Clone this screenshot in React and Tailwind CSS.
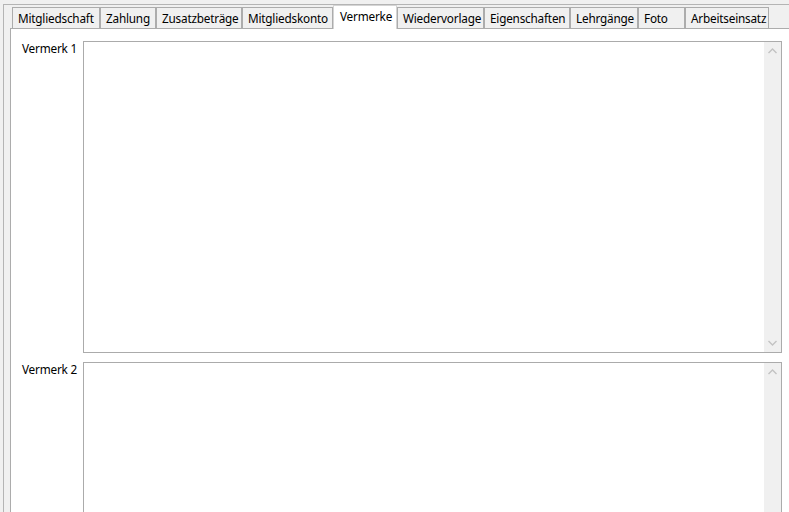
import React from "react";

const tabs = [
  { label: "Mitgliedschaft", w: "w-[88px]" },
  { label: "Zahlung", w: "w-[56px]" },
  { label: "Zusatzbeträge", w: "w-[86px]" },
  { label: "Mitgliedskonto", w: "w-[91px]" },
  { label: "Vermerke", w: "w-[64px]", active: true },
  { label: "Wiedervorlage", w: "w-[87px]" },
  { label: "Eigenschaften", w: "w-[86px]" },
  { label: "Lehrgänge", w: "w-[68px]" },
  { label: "Foto", w: "w-[47px]" },
  { label: "Arbeitseinsatz", w: "w-[84px]" },
];

function Up() {
  return (
    <svg width="9" height="6" viewBox="0 0 9 6">
      <path d="M0.5 5 L4.5 1 L8.5 5" fill="none" stroke="#c3c3c3" strokeWidth="1.4" />
    </svg>
  );
}
function Down() {
  return (
    <svg width="9" height="6" viewBox="0 0 9 6">
      <path d="M0.5 1 L4.5 5 L8.5 1" fill="none" stroke="#c3c3c3" strokeWidth="1.4" />
    </svg>
  );
}

function Memo({ h }) {
  return (
    <div className={`flex w-[699px] ${h} border border-[#ababab] bg-white`}>
      <div className="flex-1" />
      <div className="flex w-[17px] flex-col items-center justify-between bg-[#f0f0f0] pt-[6px] pb-[6px]">
        <Up />
        <Down />
      </div>
    </div>
  );
}

export default function App() {
  return (
    <div
      className="h-[512px] w-[789px] overflow-hidden bg-[#f0f0f0] pl-[3px] pt-[4px] text-[11.75px] tracking-[-0.2px] text-black"
      style={{ fontFamily: '"Noto Sans", "Open Sans", sans-serif' }}
    >
      <div className="flex h-[600px] flex-col border-l border-t border-[#b4b4b4] pl-[6px]">
        <div className="flex h-[24px] w-[900px] items-end border-b border-[#acacac] pl-[2px]">
          {tabs.map((t) =>
            t.active ? (
              <div
                key={t.label}
                className={`${t.w} -mb-[1px] flex h-[24px] items-center justify-start border-x border-t border-[#d4d4d4] bg-white pb-[3px] pl-[6px] leading-[16px]`}
              >
                {t.label}
              </div>
            ) : (
              <div
                key={t.label}
                className={`${t.w} flex h-[21px] items-center justify-start border border-b-0 border-[#acacac] bg-[#f0f0f0] pl-[5px] leading-[16px]`}
              >
                {t.label}
              </div>
            )
          )}
        </div>
        <div className="flex w-[900px] flex-1 flex-col gap-[9px] border-l border-[#acacac] bg-white pt-[12px]">
          <div className="flex">
            <div className="-mt-[1px] w-[72px] pr-[6px] text-right leading-[16px]">Vermerk 1</div>
            <Memo h="h-[312px]" />
          </div>
          <div className="flex">
            <div className="-mt-[1px] w-[72px] pr-[6px] text-right leading-[16px]">Vermerk 2</div>
            <Memo h="h-[312px]" />
          </div>
        </div>
      </div>
    </div>
  );
}
